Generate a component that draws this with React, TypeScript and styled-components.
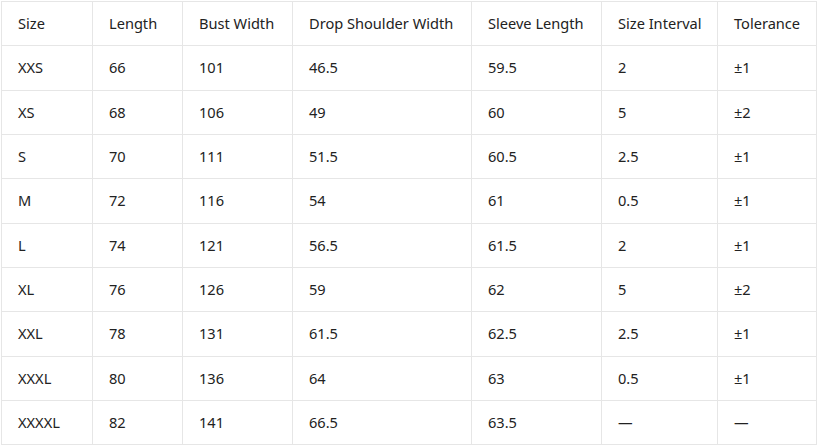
import React from 'react';
import styled, { createGlobalStyle } from 'styled-components';

const GlobalStyle = createGlobalStyle`
  html, body {
    margin: 0;
    padding: 0;
    background: #ffffff;
  }
  body {
    font-family: "Noto Sans", "Open Sans", sans-serif;
  }
`;

const columns = [
  { title: 'Size', width: 91 },
  { title: 'Length', width: 90 },
  { title: 'Bust Width', width: 110 },
  { title: 'Drop Shoulder Width', width: 179 },
  { title: 'Sleeve Length', width: 130 },
  { title: 'Size Interval', width: 116 },
  { title: 'Tolerance', width: 99 },
];

const rows = [
  ['XXS', '66', '101', '46.5', '59.5', '2', '±1'],
  ['XS', '68', '106', '49', '60', '5', '±2'],
  ['S', '70', '111', '51.5', '60.5', '2.5', '±1'],
  ['M', '72', '116', '54', '61', '0.5', '±1'],
  ['L', '74', '121', '56.5', '61.5', '2', '±1'],
  ['XL', '76', '126', '59', '62', '5', '±2'],
  ['XXL', '78', '131', '61.5', '62.5', '2.5', '±1'],
  ['XXXL', '80', '136', '64', '63', '0.5', '±1'],
  ['XXXXL', '82', '141', '66.5', '63.5', '—', '—'],
];

const App = () => {
  return (
    <>
      <GlobalStyle />
      <Page>
        <SizeTable>
          <colgroup>
            {columns.map((c) => (
              <col key={c.title} style={{ width: c.width }} />
            ))}
          </colgroup>
          <thead>
            <tr>
              {columns.map((c) => (
                <HeadCell key={c.title}>{c.title}</HeadCell>
              ))}
            </tr>
          </thead>
          <tbody>
            {rows.map((r) => (
              <tr key={r[0]}>
                {r.map((v, i) => (
                  <Cell key={i}>{v}</Cell>
                ))}
              </tr>
            ))}
          </tbody>
        </SizeTable>
      </Page>
    </>
  );
};

export default App;

const Page = styled.div`
  padding: 1px 0 0 1px;
  width: 817px;
  height: 445px;
  box-sizing: border-box;
  overflow: hidden;
`;

const SizeTable = styled.table`
  border-collapse: collapse;
  table-layout: fixed;
  width: 815px;
  color: #222222;
  font-size: 14.6px;
`;

const Cell = styled.td`
  height: 42.33px;
  padding: 0 0 1px 16px;
  border: 1px solid #e6e6e6;
  text-align: left;
  vertical-align: middle;
  white-space: nowrap;
  font-weight: 400;
  line-height: 18px;
`;

const HeadCell = styled(Cell).attrs({ as: 'th' })``;
